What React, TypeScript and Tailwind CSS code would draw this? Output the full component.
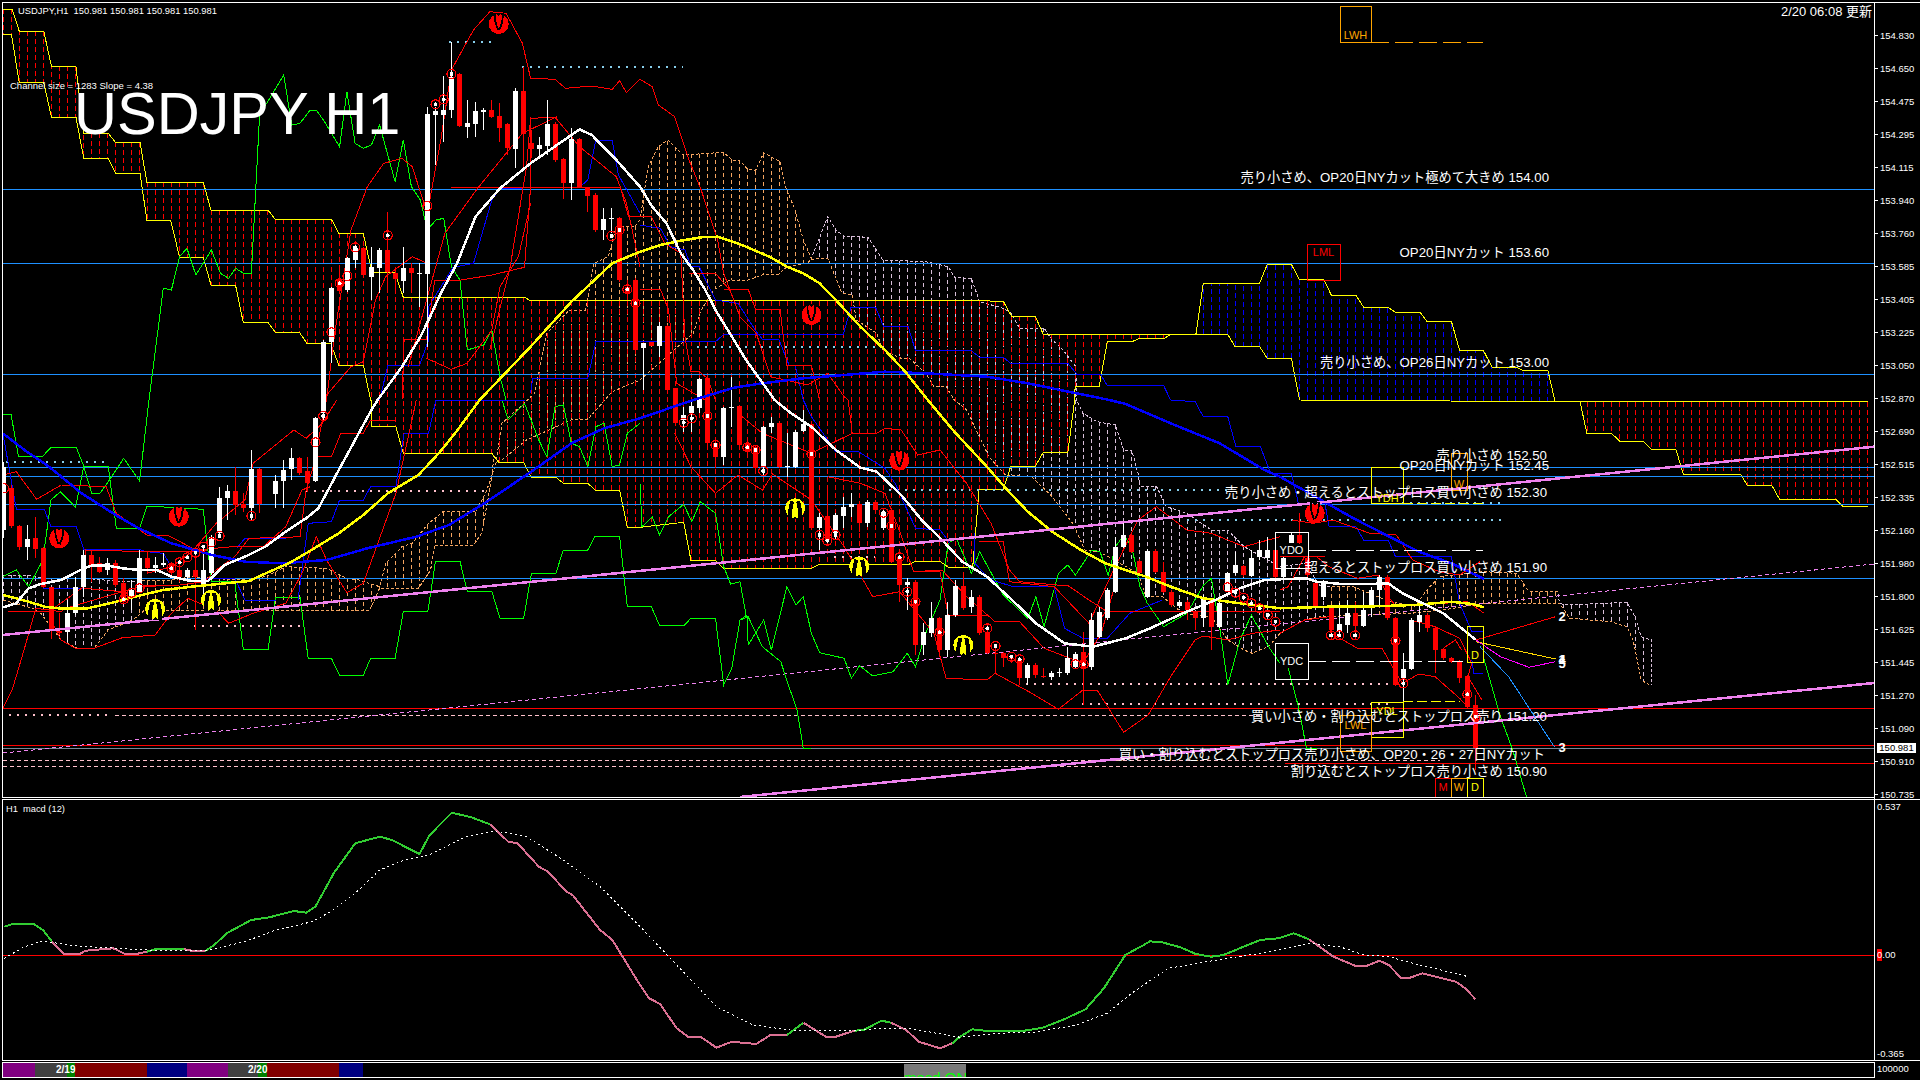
import React from "react";

type Pt = [number, number];
const tile = (ox: number, oy: number, sx = 2.45, sy = 3) => (f: number[]): Pt[] => {
  const out: Pt[] = [];
  for (let i = 0; i < f.length; i += 2) out.push([ox + f[i] / sx, oy + f[i + 1] / sy]);
  return out;
};
const t1 = tile(0, 0), t2 = tile(640, 0), t3 = tile(1280, 0), t4 = tile(0, 400), t5 = tile(640, 400), t6 = tile(1280, 400);
const m7 = tile(0, 780, 1.633, 3), m8 = tile(960, 780, 1.633, 3);
const str = (p: Pt[]) => p.map(([x, y]) => `${x.toFixed(1)},${y.toFixed(1)}`).join(" ");

const Line = ({ p, c, w = 1, d }: { p: Pt[]; c: string; w?: number; d?: string }) => (
  <polyline points={str(p)} fill="none" stroke={c} strokeWidth={w} strokeDasharray={d} />
);

const yAt = (p: Pt[], x: number): number | null => {
  for (let i = 0; i < p.length - 1; i++) {
    const [a, b] = [p[i], p[i + 1]];
    if (x >= a[0] && x <= b[0]) return b[0] === a[0] ? b[1] : a[1] + ((b[1] - a[1]) * (x - a[0])) / (b[0] - a[0]);
  }
  return null;
};

// Ichimoku span lines
const U: Pt[] = [
  ...t1([7,28,30,28,47,93,107,93,126,198,186,198,205,400,265,400,283,427,343,427,360,547,498,547,517,631,657,631,674,658,812,658,830,700,890,700,908,800,908,817,967,817,988,892,1285,892,1300,902,1568,902]),
  ...t2([0,902,825,902,890,904,910,948,968,948,988,1003,1360,1003,1440,1003,1458,1040,1518,1040,1537,1075,1568,1075]),
  ...t3([0,1075,28,1075,47,1195]),
  ...t6([47,0,672,5,1440,5]),
];
const L: Pt[] = [
  ...t1([7,102,28,102,47,247,107,247,126,351,186,351,205,474,265,474,283,520,343,520,360,660,418,660,440,772,498,772,517,855,577,855,596,968,657,968,674,996,733,996,752,1030,810,1030,830,1095,890,1095,908,1200]),
  ...t4([909,0,909,80,970,80,988,160,1205,160,1222,188,1283,188,1302,232,1362,232,1380,250,1440,250,1458,270,1518,270,1537,382,1568,382]),
  ...t5([0,382,107,367,125,482,185,482,205,505,420,505,440,492,660,492,675,484,735,484,755,502,815,502,828,310,830,268,890,268,908,200,968,200,988,157,1048,157,1065,0]),
  ...t2([1066,1158,1125,1158,1145,1025,1205,1025,1225,1015,1285,1015,1300,1003,1362,1003,1380,850,1518,850,1537,793,1568,793]),
  ...t3([0,793,28,793,47,838,107,838,126,886,186,886,205,922,264,922,283,937,343,937,360,964,420,964,440,1051,498,1051,520,1102,580,1102,595,1111,656,1111,672,1195]),
  ...t6([673,5,735,5,752,100,812,100,832,123,890,123,910,148,970,148,988,222,1128,222,1145,256,1205,256,1224,298,1362,298,1380,320,1440,320]),
];
const CU: Pt[] = [
  ...t4([7,525,70,525,105,535,210,535,300,545,420,540,470,530,580,540,650,530,700,500,800,505,850,535,880,540,930,560,945,490,985,440,1010,430,1050,370,1085,335,1165,335,1190,280,1215,190,1230,70]),
  ...t1([1310,1180,1340,1000,1395,930,1435,930,1455,790,1490,770,1510,680,1555,680]),
  ...t2([0,660,20,500,45,440,68,420,105,465,205,457,225,480,243,480,262,505,283,512,303,458,343,485,358,565,380,630,400,720,420,775,460,650,480,690,500,708,558,712,595,780,700,785,755,800,772,833,812,835,832,905,890,925,910,940,930,985,990,985,1010,1020,1030,1040,1068,1100,1069,1200]),
  ...t5([1070,0,1085,40,1120,65,1165,75,1185,150,1205,150,1220,220,1225,258,1265,258,1290,320,1340,340,1400,390,1440,390,1480,440,1568,500]),
  ...t6([0,500,60,490,100,560,180,560,260,600,330,620,360,570,390,530,500,515,580,520,610,575,680,575,685,610,700,615,850,607,870,650,885,710,910,720,910,855]),
];
const CL: Pt[] = [
  ...t4([7,600,80,625,100,640,150,720,190,745,230,745,265,690,325,660,355,630,460,632,905,632,930,565,1025,565,1055,510,1065,435,1160,435,1180,400,1195,300,1205,230,1210,170,1225,185,1290,120,1400,60,1440,58,1500,-25,1568,-60]),
  ...t2([130,1000,150,930,180,870,220,840,265,840,300,825,340,822,360,800,410,790,420,778,460,775,495,880,520,885,530,960,580,1000,595,1050,640,1075,660,1075,700,1120,720,1160,750,1160,770,1200]),
  ...t5([771,0,800,30,855,170,895,225,960,230,1010,290,1060,370,1090,450,1125,455,1220,520,1240,590,1280,590,1330,640,1400,650,1440,720,1480,750,1500,760,1540,740,1568,700]),
  ...t6([0,700,60,660,100,650,320,640,400,630,500,610,685,610,710,655,810,665,850,680,865,720,885,840,905,855]),
];

const bars = Array.from({ length: 234 }, (_, k) => 3 + 8 * k);
const span = (a: Pt[], b: Pt[], c: (x: number) => string, d: string) =>
  bars.map((x) => {
    const ya = yAt(a, x), yb = yAt(b, x);
    if (ya === null || yb === null || Math.abs(ya - yb) < 2) return null;
    return <line key={x} x1={x} x2={x} y1={ya} y2={yb} stroke={c(x)} strokeDasharray={d} />;
  });

const isTan = (x: number) => (x >= 135 && x < 812) || (x >= 1330 && x < 1558);

// [zoom x, body top, body bottom, wick top, wick bottom, 0 white | 1 red]
const C4 = [[8,200,390,185,415,0],[27,265,378,255,385,1],[47,378,440,375,450,1],[67,418,440,375,480,0],[86,415,448,350,475,1],[106,445,560,440,565,1],[125,562,688,560,718,1],[145,692,700,640,705,1],[165,640,695,600,725,0],[184,560,640,530,645,0],[204,465,560,450,590,0],[224,465,500,450,545,1],[243,490,515,470,520,1],[263,490,510,475,525,0],[283,490,555,480,560,1],[303,548,605,535,610,1],[322,570,590,540,630,0],[342,475,575,450,580,0],[361,475,505,455,520,1],[381,495,503,470,520,0],[400,490,495,460,500,0],[420,490,515,485,525,1],[440,510,530,490,545,1],[459,510,530,505,545,0],[479,510,530,455,690,1],[498,510,560,435,600,0],[518,410,520,405,525,0],[538,295,400,260,410,0],[557,272,295,255,360,0],[577,272,315,200,345,1],[596,312,325,280,335,1],[616,207,325,150,360,0],[636,208,312,205,340,1],[675,243,282,225,325,0],[694,210,242,180,325,0],[714,175,208,145,240,0],[734,175,220,170,225,1],[753,212,248,170,275,1],[773,55,243,50,245,0],[792,-174,40,-180,60,0]];
const C1 = [[810,865,1025,860,1090,0],[830,840,872,805,880,1],[851,775,870,770,875,0],[870,745,780,735,805,0],[890,745,826,740,830,1],[910,800,830,740,900,0],[930,750,805,745,880,0],[950,750,815,635,880,1],[969,818,838,800,870,1],[988,803,843,740,880,0],[1008,803,820,790,880,1],[1028,820,822,790,920,0],[1047,343,822,320,1040,0],[1067,332,345,320,495,0],[1087,330,345,228,425,0],[1106,230,330,125,355,0],[1126,222,378,220,380,1],[1145,370,380,300,415,0],[1165,333,372,305,410,0],[1185,330,335,325,390,0],[1204,330,350,300,355,1],[1224,347,385,310,425,1],[1243,372,443,370,465,1],[1263,272,446,265,505,0],[1283,272,402,200,500,1],[1302,430,446,390,475,1],[1322,435,446,410,475,0],[1341,372,438,300,465,0],[1361,372,480,365,485,1],[1381,477,548,475,598,1],[1400,417,548,385,600,0],[1420,417,560,415,565,1],[1439,562,587,560,635,1],[1459,585,690,580,695,1],[1479,657,690,625,720,0],[1498,655,658,625,700,0],[1518,655,840,650,845,1],[1537,860,880,840,900,1],[1557,840,1050,835,1055,1]];
const C5 = [[8,-170,-155,-170,-30,0],[28,-175,-163,-175,-163,1],[47,-222,-162,-235,-130,0],[67,-222,-30,-225,-25,1],[86,-35,70,-30,75,1],[106,45,60,20,95,0],[125,18,40,0,95,0],[145,-62,25,-65,40,0],[165,-65,130,-68,135,1],[184,128,170,120,205,1],[204,25,170,20,195,0],[224,20,25,-70,80,0],[243,18,135,15,140,1],[263,130,155,125,160,1],[283,140,205,135,210,1],[302,82,200,78,225,0],[322,68,80,50,100,0],[342,70,200,68,205,1],[361,197,202,100,230,0],[381,95,200,90,205,0],[400,72,92,30,95,0],[420,72,385,70,390,1],[440,350,385,340,450,0],[459,348,420,270,432,1],[479,345,400,340,420,0],[498,320,348,290,385,0],[518,313,320,280,350,0],[538,312,368,310,395,1],[557,305,368,300,380,0],[577,305,330,300,335,1],[596,335,385,330,390,0],[616,330,485,325,490,1],[636,470,555,465,605,1],[655,545,555,535,630,0],[675,545,735,540,765,1],[694,695,735,670,765,0],[714,655,700,605,710,0],[734,655,750,650,770,1],[753,645,750,605,770,0],[773,558,645,540,650,0],[792,558,625,515,630,1],[812,590,620,570,640,0],[832,590,700,585,705,1],[851,695,760,670,762,1],[871,760,762,735,820,1],[891,760,775,755,800,1],[910,775,778,770,790,1],[930,780,835,775,855,1],[950,795,835,790,855,0],[969,795,825,790,835,1],[989,828,830,805,835,1],[1008,818,830,812,840,0],[1028,815,820,805,830,0],[1047,775,820,740,825,0],[1067,762,800,755,805,0],[1087,755,805,695,915,1],[1106,660,800,640,810,0],[1126,635,710,620,715,0],[1145,570,655,565,660,0],[1165,440,575,410,580,0],[1185,405,440,370,445,0],[1204,405,455,400,460,1],[1224,482,520,478,525,1],[1243,452,590,448,595,0],[1263,452,515,448,520,1],[1283,515,575,485,580,1],[1302,575,615,570,620,1],[1322,605,618,600,625,0],[1341,605,630,600,660,1],[1361,637,655,632,690,1],[1380,590,655,585,680,0],[1400,600,680,595,750,1],[1420,610,680,605,685,0],[1440,520,572,515,575,0],[1459,495,520,455,525,0],[1479,498,525,495,530,1],[1498,475,527,450,530,0],[1518,450,472,420,480,0],[1538,450,475,410,480,0],[1558,450,530,445,535,1]];
const C6 = [[8,475,530,470,535,0],[28,405,428,395,430,0],[47,405,430,340,432,1],[67,475,525,468,530,1],[86,550,620,545,625,1],[106,545,590,540,600,0],[125,620,690,615,720,1],[145,672,692,610,700,0],[165,640,675,600,700,0],[184,640,678,605,720,1],[204,630,678,575,680,0],[224,570,620,560,650,0],[243,530,570,525,620,0],[263,530,655,525,660,1],[283,655,855,650,858,1],[302,808,835,760,1000,0],[322,660,808,655,810,0],[341,645,665,615,695,0],[361,645,685,640,695,1],[381,685,750,680,820,1],[400,748,775,745,780,1],[420,775,785,772,788,1],[440,785,833,780,850,1],[459,828,920,825,925,1],[479,915,1045,885,1110,1]];

const candles = (rows: number[][], ox: number, oy: number) =>
  rows.map((r) => {
    const k = Math.round((ox + r[0] / 2.45 - 3) / 8);
    const x = 3 + 8 * k;
    const col = r[5] ? "#ff0000" : "#ffffff";
    const top = oy + r[1] / 3, bot = oy + r[2] / 3;
    return (
      <g key={`${ox}-${r[0]}`}>
        <line x1={x} x2={x} y1={oy + r[3] / 3} y2={oy + r[4] / 3} stroke={col} />
        <rect x={x - 2.5} y={top} width={5} height={Math.max(1, bot - top)} fill={col} />
      </g>
    );
  });

const rings: Pt[] = [
  ...t1([812,997,832,850,851,828,870,742,950,706,1047,618,1067,313,1087,298,1106,222,1498,708,1518,690,1537,868,1557,910]),
  ...t4([10,265,792,48,773,127,538,408,518,427,498,440,479,458,459,472,440,487,420,505,616,348,342,565,322,578,303,598]),
  ...t5([107,68,127,55,165,48,185,135,263,142,283,150,302,213,420,162,597,338,616,378,636,472,655,575,675,605,440,405,459,422,479,405,734,697,851,685,871,738,910,770,930,778,1067,793,1087,793,1440,562,1459,578,1479,593,1498,610,1518,625,1538,645,1557,665]),
  ...t6([125,706,145,706,184,706,283,722,302,850,459,883,479,950]),
];
const Down: Pt[] = [...t1([1222,72]), ...t2([420,945]), ...t4([438,350,145,415]), ...t5([635,182]), ...t6([85,340])];
const UpA: Pt[] = [...t4([380,627,517,600]), ...t5([380,325,537,500,792,735])];

const Arrow = ({ p, up }: { p: Pt; up?: boolean }) => {
  const c = up ? "#ffff00" : "#ff0000";
  const slit = up ? 4 : 1.8;
  return (
    <g transform={`translate(${p[0]} ${p[1]}) scale(1 ${up ? -1 : 1})`}>
      <ellipse cx={0} cy={0} rx={10} ry={10} fill={c} />
      <path d="M -3 -11 L 3 -11 L 0 -8 Z" fill="#000000" />
      <path d={up ? "M -5 -11 Q -5.5 -2 -3 7" : "M -4 -11 Q -4.5 -2 -0.5 6"} fill="none" stroke="#000000" strokeWidth={slit} />
      <path d={up ? "M 5 -11 Q 5.5 -2 3 7" : "M 4 -11 Q 4.5 -2 0.5 6"} fill="none" stroke="#000000" strokeWidth={slit} />
    </g>
  );
};

const reds: Pt[][] = [
  t4([7,925,30,870,60,745,88,625,150,635,160,625,300,575,345,560,440,555,500,545,530,510,575,470,610,415,700,412,735,410,750,270,775,170,812,170,835,100,890,100,908,60,970,60]),
  t4([7,225,40,215,90,298,150,255,260,260,285,340,360,405,410,405,480,450,570,440,645,440,700,380,740,270,760,260]),
  t4([120,650,150,720,185,745,230,745,300,713,380,705,420,640,460,595,530,630,560,670,620,640,700,610,740,520,775,410,800,480,850,578,890,550,970,280,1020,0]),
  t4([360,520,420,500,470,455,530,370,600,300,620,190,720,90,750,115,790,70,825,0]),
  t4([205,565,300,575,360,555,420,555]),
  t4([20,635,120,635,205,560,210,450,360,455,500,455]),
  t1([790,1200,860,1100,890,1085,920,900,945,830,1010,770,1047,790]),
  [...t4([780,120,800,0]), ...t1([820,1000,860,690,900,560,940,490,985,475,1010,500,1047,640,1080,420,1106,210,1160,90,1200,35,1240,40,1280,130,1300,235,1360,238,1385,265,1450,258,1500,268,1518,242,1535,278,1568,238]), ...t2([0,238,30,260,45,315,85,350,120,480,150,570,190,720,205,820,245,950,285,1000,320,1130,410,1155,460,1120,500,1190,510,1200]), ...t5([510,0,520,100,580,100,600,85,640,90,680,165,735,150,800,250,860,370,905,510,930,545,1050,558,1100,600,1145,635,1400,635])],
  t1([1000,1100,1090,700,1170,565,1280,400,1365,350]),
  t1([1200,1050,1250,800,1290,500,1300,355,1360,352,1420,440,1510,530,1535,610,1568,800]),
  t1([1045,1075,1105,1108,1145,1090,1205,990,1225,860,1270,770,1300,610]),
  t1([1105,563,1520,563,1540,650,1568,650]),
  t1([985,1200,990,1018,1045,1018,1065,840,1130,840,1205,825,1285,802,1300,560,1300,352]),
  t2([0,650,28,650,60,730,100,760,110,1010,125,1115,145,1115,165,1135,185,1200]),
  t2([205,868,265,868,283,928,343,928,360,1095,420,1095,440,1200]),
  t2([120,820,185,820,220,870,245,950]),
  t2([0,868,50,868,70,930,90,1150,160,1200]),
  t5([85,100,125,200,185,280,240,225,300,270,325,222,420,300,500,440,570,590,636,575,720,700,750,835,850,840,870,820,960,880,1025,928,1085,870,1120,870,1185,997,1245,945,1300,830,1360,720,1380,708,1440,720,1500,700,1568,690]),
  t5([460,230,540,250,600,280,635,390,670,515,740,510,800,590,870,665,930,665,990,745,1085,790,1130,700,1165,550]),
  t5([830,425,890,425,905,545,1015,560,1100,670,1160,510,1220,360,1265,320,1340,390,1400,400,1480,440,1568,410]),
  t5([675,515,735,515,755,645,850,645]),
  t5([240,40,300,100,420,160,520,100]),
  t5([1130,655,1140,635,1568,635]),
  t6([30,360,80,370,130,360,220,400,285,405,325,480,390,515,440,525,490,485]),
  t6([0,570,20,560,60,470,90,470,120,500,190,535,240,525,265,590,285,620,340,615,460,605,500,640]),
  t6([0,700,60,660,120,650,125,700,190,745,250,745,280,810,300,850,340,822,380,830,440,895,460,920]),
  t6([320,660,380,680,440,715,470,790,460,830,495,900]),
  t6([400,745,430,720,445,750]),
  t6([0,470,110,470]),
];
const blues: Pt[][] = [
  t1([930,1200,950,1097,1028,1095,1050,1020,1050,920,1110,802,1160,790,1205,600,1225,565,1420,562,1440,540,1460,420,1500,420,1515,525,1568,640]),
  t2([0,675,50,685,75,740,110,750,125,800,145,800,185,900,240,910,285,995,300,1018,340,1018,365,1095,380,1095,400,1200]),
  t1([1300,1180,1305,1135,1440,1135,1460,1025,1568,1025]),
  [...t2([0,1025,185,1025,205,1003,498,1003,517,922,577,922,597,980,657,980,675,1052,812,1052,832,1072,890,1072,908,1090,1048,1090,1070,1122,1128,1122,1145,1157,1283,1157,1300,1200]), ...t5([1300,0,1360,5,1380,50,1440,50,1460,140,1520,140,1545,220]), ...t6([0,220,28,220,45,310,110,310,120,378,185,378,205,420,265,420,283,470,420,470,440,610,470,695,498,695])],
  t4([730,600,755,370,812,365,832,300,890,300,908,260,970,260,990,100,1050,100,1068,0,1285,0]),
  t4([7,100,40,327,108,327,125,380,187,380,205,448,345,450,360,455,400,460,420,500]),
  t4([105,565,205,565,205,535]),
  t4([500,535,575,535,600,600,675,600]),
  t4([580,445,600,415,700,415]),
  t5([400,0,420,50,480,155,535,155,600,205,625,250,675,385,735,390,760,430]),
  t5([820,400,820,490,860,540,915,560,1015,560,1040,685,1085,715,1145,715,1200,640,1280,600]),
  t6([470,780,475,820,498,820]),
];
const greens: Pt[][] = [
  t1([365,1200,400,865,420,870,440,770,458,745,480,825,518,750,540,820,560,835,577,805,597,820,616,820,630,490,636,345,695,225,715,375,735,370,760,330,775,330,795,365,832,440,850,275,870,430,890,445,910,435,930,375,968,545,988,420,1008,560,1030,600,1047,690,1068,660,1087,655,1106,800,1127,840,1145,1050,1185,1035,1205,990,1225,1130,1240,1200]),
  t4([365,0,342,243,303,175,268,240,245,280,225,280,205,200,185,322,148,275,125,300,105,480,70,560,40,510,7,530]),
  t4([7,42,27,42,45,168,105,168,125,142,187,142,205,198,265,198,285,385,342,385,360,318,498,328,518,545,575,545,596,747,657,747,675,592,735,592,755,775,812,775,832,826,890,826,908,775,968,775,988,635,1048,635,1067,484,1127,484,1145,574,1205,574,1225,655,1283,655,1302,520,1362,520,1380,450,1440,450,1458,409,1518,409,1537,620,1568,620]),
  t5([0,620,28,620,48,677,107,677,125,655,185,655,205,855,225,805,245,660,262,645,265,735,303,660,322,750,360,560,382,615,400,590,420,700,440,758,500,775,518,835,538,797,570,828,620,815,655,760,675,800,700,700,735,600,755,430,775,415,812,520,832,455,890,585,950,655,970,590,990,680,1025,520,1048,495,1067,525,1107,450,1127,455,1147,525,1165,440,1185,405,1205,440,1225,560,1243,610,1283,680,1340,640,1381,555,1400,535,1420,680,1440,855,1470,720,1498,645,1540,740,1568,790]),
  t4([1230,0,1245,60,1285,10,1320,120,1340,170,1360,20,1380,15,1400,130,1420,140,1440,200,1460,80,1480,70,1500,200,1518,195,1537,100,1568,70]),
  t5([0,250,5,380,30,350,48,405,70,350,107,313,127,365,148,305,185,340,205,500,222,552,245,545,260,645]),
  t5([245,660,265,650,300,740,345,785,362,850,385,930,400,1045,420,1045]),
  t6([20,805,45,920,65,1045,90,1045]),
  t6([498,770,540,950,570,1050,605,1195]),
];

const White = [...t4([7,622,40,610,70,565,100,552,150,540,205,505,225,497,265,497,300,505,340,510,385,510,420,530,470,543,510,543,550,495,600,470,650,440,700,395,750,355,780,325,830,210,870,120,910,30,925,0]), ...t1([985,1100,1030,1010,1050,960,1080,880,1120,790,1165,650,1225,565,1300,490,1420,388,1450,405,1510,480,1568,560]), ...t2([30,620,65,670,100,760,130,810,160,870,185,930,220,1000,260,1080,330,1200]), ...t5([370,40,420,80,480,150,540,203,580,215,640,285,690,360,740,420,790,485,850,530,920,610,970,670,1040,730,1110,740,1190,715,1250,685,1330,640,1410,600,1470,565,1530,540,1568,538]), ...t6([65,535,90,545,150,552,220,552,265,550,300,580,350,610,400,640,460,700,480,720])];
const Yellow = [...t4([7,585,50,598,110,620,150,626,210,626,270,610,330,590,400,570,470,560,610,543,660,515,710,488,750,460,830,400,890,345,950,280,1025,225,1075,160,1115,100,1175,0]), ...t1([1300,1040,1400,905,1500,790,1568,755]), ...t2([50,735,100,722,150,712,190,710,250,735,320,772,360,800,400,820,440,850,480,900,540,980,600,1050,650,1115,705,1200]), ...t5([770,95,850,200,900,270,950,335,1010,395,1080,450,1140,490,1240,530,1300,560,1380,595,1470,610,1568,625]), ...t6([120,620,200,620,330,615,420,605,470,612,500,622])];
const Blue = [...t4([7,100,60,150,120,200,200,280,290,350,340,385,420,430,520,465,600,485,690,490,800,480,900,445,1020,410,1100,375,1180,315,1290,225,1400,130,1480,85,1568,55]), ...t2([130,1200,230,1163,300,1150,400,1135,500,1125,600,1115,700,1120,850,1130,950,1150,1050,1175,1150,1200]), ...t5([1190,12,1300,70,1420,130,1530,210,1568,230]), ...t6([50,265,115,310,180,355,260,405,340,455,420,490,500,537])];

const hBlue = [189.5, 263.5, 374.5, 467.5, 476.5, 504.5, 578.5];

const Box = ({ x, y, w, h, c, t, ty }: { x: number; y: number; w: number; h: number; c: string; t: string; ty: number }) => (
  <g>
    <rect x={x + 0.5} y={y + 0.5} width={w} height={h} fill="none" stroke={c} />
    <text x={x + w / 2} y={ty} textAnchor="middle" fill={c} fontSize={11} fontFamily="Liberation Sans" shapeRendering="auto">{t}</text>
  </g>
);

const dots: [number, number, number, string][] = [
  [449,491,42,"#87ceeb"],[522,683,67,"#87ceeb"],[6,107,462,"#87ceeb"],[697,876,347,"#87ceeb"],[889,1228,490,"#87ceeb"],[1187,1505,520,"#87ceeb"],[1402,1504,503,"#87ceeb"],
  [306,486,491,"#ffc0cb"],[194,300,626,"#ffc0cb"],[9,107,715,"#ffc0cb"],[834,875,557,"#ffc0cb"],[1026,1390,684,"#ffc0cb"],[1082,1390,704,"#ffc0cb"],
];

const MainChart = () => (
  <svg viewBox="3 3 1871 794" className="block w-full h-full" shapeRendering="crispEdges">
    <defs>
      <clipPath id="tanClip"><rect x="135" y="0" width="677" height="800" /><rect x="1330" y="0" width="228" height="800" /></clipPath>
      <clipPath id="thistleClip"><rect x="0" y="0" width="135" height="800" /><rect x="812" y="0" width="518" height="800" /><rect x="1558" y="0" width="200" height="800" /></clipPath>
    </defs>
    {/* past and future clouds */}
    {span(CU, CL, (x) => (isTan(x) ? "#f4a460" : "#d8bfd8"), "4 3")}
    <g clipPath="url(#tanClip)"><Line p={CU} c="#f4a460" d="3 2" /><Line p={CL} c="#f4a460" d="3 2" /></g>
    <g clipPath="url(#thistleClip)"><Line p={CU} c="#d8bfd8" d="3 2" /><Line p={CL} c="#f4a460" d="3 2" /></g>
    {/* ichimoku cloud */}
    {span(U, L, (x) => (x > 1195 && x < 1556 ? "#0000ff" : "#ff0000"), "5 3")}
    <Line p={U} c="#ffff00" />
    <Line p={L} c="#ffff00" />
    {/* price levels */}
    {hBlue.map((y) => <line key={y} x1={3} x2={1874} y1={y} y2={y} stroke="#1e90ff" />)}
    <line x1={3} x2={1874} y1={708.5} y2={708.5} stroke="#ff0000" />
    <line x1={3} x2={1874} y1={745.5} y2={745.5} stroke="#ff0000" />
    <line x1={3} x2={1874} y1={748.5} y2={748.5} stroke="#778899" />
    <line x1={1285} x2={1874} y1={763.5} y2={763.5} stroke="#ff0000" />
    <line x1={3} x2={1440} y1={760.5} y2={760.5} stroke="#ffc0cb" strokeDasharray="4 3" />
    <line x1={3} x2={1350} y1={766.5} y2={766.5} stroke="#ffc0cb" strokeDasharray="4 3" />
    <line x1={115} x2={1260} y1={715.5} y2={715.5} stroke="#ffc0cb" strokeDasharray="4 3" />
    {dots.map(([a, b, y, c]) => <line key={`${a}-${y}`} x1={a} x2={b} y1={y} y2={y} stroke={c} strokeWidth={2} strokeDasharray="2 6" />)}
    {/* trend lines */}
    <line x1={3} x2={1874} y1={753} y2={564} stroke="#ee82ee" strokeDasharray="4 3" />
    {greens.map((p, i) => <Line key={i} p={p} c="#00ff00" />)}
    {blues.map((p, i) => <Line key={i} p={p} c="#0000ff" />)}
    {reds.map((p, i) => <Line key={i} p={p} c="#ff0000" />)}
    {candles(C4, 0, 400)}
    {candles(C1, 0, 0)}
    {candles(C5, 640, 400)}
    {candles(C6, 1280, 400)}
    <Line p={Blue} c="#0000ff" w={2.5} />
    <Line p={Yellow} c="#ffff00" w={2.5} />
    <Line p={White} c="#ffffff" w={2.5} />
    <line x1={3} x2={1874} y1={635} y2={446.7} stroke="#ee82ee" strokeWidth={2.5} />
    <line x1={740} x2={1874} y1={797} y2={683} stroke="#ee82ee" strokeWidth={2.5} />
    {rings.map((p, i) => (
      <g key={i}>
        <circle cx={p[0]} cy={p[1]} r={4.5} fill="none" stroke="#ff0000" strokeWidth={1.2} />
        <circle cx={p[0]} cy={p[1]} r={2} fill="#ffffff" />
      </g>
    ))}
    {Down.map((p, i) => <Arrow key={i} p={p} />)}
    {UpA.map((p, i) => <Arrow key={i} p={p} up />)}
    {/* projections */}
    <Line p={t6([480,720,675,650])} c="#ff0000" />
    <Line p={t6([480,725,675,777])} c="#ffd700" />
    <Line p={t6([480,720,540,770,610,802,675,785])} c="#ff00ff" />
    <Line p={t6([490,740,560,830,672,1040])} c="#1e90ff" />
    {/* daily, weekly, monthly markers */}
    <line x1={1371} x2={1483} y1={42.5} y2={42.5} stroke="#ffa500" strokeDasharray="18 6" />
    <line x1={1308} x2={1483} y1={550.5} y2={550.5} stroke="#ffffff" strokeDasharray="18 6" />
    <line x1={1308} x2={1463} y1={661.5} y2={661.5} stroke="#ffffff" strokeDasharray="18 6" />
    <line x1={1403} x2={1460} y1={701.5} y2={701.5} stroke="#ffff00" strokeDasharray="10 4" />
    <line x1={1403} x2={1483} y1={503.5} y2={503.5} stroke="#ffff00" strokeDasharray="10 4" />
    <Box x={1340} y={6} w={31} h={36} c="#ffa500" t="LWH" ty={39} />
    <Box x={1307} y={244} w={33} h={36} c="#ff0000" t="LML" ty={256} />
    <Box x={1451} y={453} w={16} h={37} c="#ffa500" t="W" ty={488} />
    <Box x={1371} y={467} w={32} h={36} c="#ffff00" t="YDH" ty={502} />
    <Box x={1275} y={532} w={33} h={36} c="#ffffff" t="YDO" ty={554} />
    <Box x={1275} y={643} w={33} h={36} c="#ffffff" t="YDC" ty={665} />
    <Box x={1371} y={702} w={32} h={35} c="#ffff00" t="YDL" ty={715} />
    <Box x={1340} y={715} w={31} h={36} c="#ffa500" t="LWL" ty={729} />
    <Box x={1467} y={626} w={16} h={36} c="#ffff00" t="D" ty={659} />
    <Box x={1435} y={778} w={16} h={20} c="#ff0000" t="M" ty={791} />
    <Box x={1451} y={778} w={16} h={20} c="#ffa500" t="W" ty={791} />
    <Box x={1467} y={778} w={16} h={20} c="#ffff00" t="D" ty={791} />
    <g fill="#ffffff" fontSize={13} fontWeight={700} fontFamily="Liberation Sans" textAnchor="middle">
      <text x={1562} y={621}>2</text>
      <text x={1562} y={664}>4</text>
      <text x={1562} y={668}>5</text>
      <text x={1562} y={664}>1</text>
      <text x={1562} y={752}>3</text>
    </g>
  </svg>
);

const MacdChart = () => (
  <svg viewBox="3 800 1871 260" className="block w-full h-full" shapeRendering="crispEdges">
    <line x1={3} x2={1874} y1={955.5} y2={955.5} stroke="#ff0000" />
    {[
      m7([7,440,20,432,55,432,70,450,85,485]),
      m7([240,515,255,507,300,507]),
      m7([335,513,350,495,370,460,390,440,410,420,440,412,480,393,500,398,515,380,530,330,545,280,580,190,620,170,640,180,685,222,700,170,715,140,738,98,770,112,800,133]),
      m7([1285,765,1312,728]),
      m7([1395,752,1410,750,1440,722,1455,728]),
      [...m7([1555,790,1568,770]), ...m8([0,770,20,748,40,752,105,752,135,743,170,718,205,688,235,625,270,525,300,495,310,484,330,487,360,502,385,522,410,530,430,525,490,480,520,475,545,460,570,478])],
    ].map((p, i) => <Line key={i} p={p} c="#32cd32" w={2} />)}
    {[
      m7([85,485,105,522,130,522,140,512,185,505,205,523,220,523,240,515]),
      m7([300,507,315,513,335,513]),
      m7([800,133,830,185,845,190,880,260,895,275,925,335,935,345,980,450,1000,480,1040,600,1060,655,1078,672,1105,745,1125,772,1145,772,1170,803,1195,785,1235,792,1258,765,1285,765]),
      m7([1312,728,1350,772,1362,772,1395,752]),
      m7([1455,728,1480,750,1500,785,1535,805,1555,790]),
      m8([570,478,610,530,645,557,665,557,685,542,700,555,720,593,735,593,755,580,810,605,825,625,842,658]),
    ].map((p, i) => <Line key={i} p={p} c="#db7093" w={2} />)}
    <Line
      p={[...m7([7,535,40,500,70,483,120,497,190,505,240,510,300,510,340,510,400,485,450,450,510,425,540,395,580,340,620,270,660,240,700,225,760,170,810,153,860,170,920,240,980,320,1040,430,1100,545,1170,680,1230,735,1290,750,1395,752,1440,745,1490,747,1568,772]), ...m8([60,760,120,757,190,735,240,700,280,640,340,565,420,540,490,520,570,490,620,500,660,525,700,530,740,550,830,590])]}
      c="#ffffff"
      d="2 3"
    />
  </svg>
);

const ticks = ["154.830","154.650","154.475","154.295","154.115","153.940","153.760","153.585","153.405","153.225","153.050","152.870","152.690","152.515","152.335","152.160","151.980","151.800","151.625","151.445","151.270","151.090","150.910","150.735"];

export default function App() {
  return (
    <div className="w-[1920px] h-[1080px] bg-black pt-[2px] pl-[2px] overflow-hidden text-white font-['Liberation_Sans','Noto_Sans_CJK_JP',sans-serif]">
      {/* price pane */}
      <div className="flex h-[796px] border-t border-white">
        <div className="relative w-[1872px] h-[795px] border-l border-b border-white overflow-hidden">
          <MainChart />
          <div className="absolute left-[15px] top-[1px] text-[9.4px] leading-[14px] whitespace-pre">USDJPY,H1  150.981 150.981 150.981 150.981</div>
          <div className="absolute left-[7px] top-[76px] text-[9.5px] leading-[14px] whitespace-pre">Channel size = 1283 Slope = 4.38</div>
          <div className="absolute left-[71px] top-[81px] text-[59.5px] leading-[60px] whitespace-pre">USDJPY H1</div>
          <div className="absolute right-[2px] top-[1px] text-[13px] leading-[16px] whitespace-pre">2/20 06:08 更新</div>
          <div className="absolute right-[325px] top-[167px] text-[13.25px] leading-[16px] whitespace-pre">売り小さめ、OP20日NYカット極めて大きめ 154.00</div>
          <div className="absolute right-[325px] top-[242px] text-[13.25px] leading-[16px] whitespace-pre">OP20日NYカット 153.60</div>
          <div className="absolute right-[325px] top-[352px] text-[13.25px] leading-[16px] whitespace-pre">売り小さめ、OP26日NYカット 153.00</div>
          <div className="absolute right-[327px] top-[445px] text-[13.25px] leading-[16px] whitespace-pre">売り小さめ 152.50</div>
          <div className="absolute right-[325px] top-[455px] text-[13.25px] leading-[16px] whitespace-pre">OP20日NYカット 152.45</div>
          <div className="absolute right-[327px] top-[482px] text-[13.25px] leading-[16px] whitespace-pre">売り小さめ・超えるとストップロス買い小さめ 152.30</div>
          <div className="absolute right-[327px] top-[557px] text-[13.25px] leading-[16px] whitespace-pre">超えるとストップロス買い小さめ 151.90</div>
          <div className="absolute right-[327px] top-[706px] text-[13.25px] leading-[16px] whitespace-pre">買い小さめ・割り込むとストップロス売り 151.20</div>
          <div className="absolute right-[329px] top-[744px] text-[13.25px] leading-[16px] whitespace-pre">買い・割り込むとストップロス売り小さめ、OP20・26・27日NYカット</div>
          <div className="absolute right-[327px] top-[761px] text-[13.25px] leading-[16px] whitespace-pre">割り込むとストップロス売り小さめ 150.90</div>
        </div>
        <div className="relative flex-1 border-l border-white pt-[16px] h-[796px]">
          {ticks.map((t) => (
            <div key={t} className="flex items-center h-[33px] text-[9.5px] leading-none">
              <span className="w-[3px] h-px bg-white mr-[2px]" />
              <span>{t}</span>
            </div>
          ))}
          <div className="absolute left-[2px] top-[740px] w-[39px] h-[10px] bg-white text-black text-[9.5px] leading-[10px] text-center">150.981</div>
        </div>
      </div>
      {/* indicator pane */}
      <div className="flex h-[262px] mt-[1px] border-t border-b border-white">
        <div className="relative w-[1872px] border-l border-white overflow-hidden">
          <MacdChart />
          <div className="absolute left-[3px] top-[3px] text-[9.3px] leading-[12px] whitespace-pre">H1  macd (12)</div>
        </div>
        <div className="flex-1 flex flex-col items-start border-l border-white pl-[2px] pt-[1px] text-[9.5px] leading-[12px]">
          <div>0.537</div>
          <div className="mt-[136px] bg-[linear-gradient(90deg,#ff0000_5px,transparent_5px)]">0.00</div>
          <div className="mt-[87px]">-0.365</div>
        </div>
      </div>
      {/* time strip */}
      <div className="flex h-[16px] mt-[1px]">
        <div className="flex w-[1872px] border-l border-t border-b border-white overflow-hidden">
          <div className="w-[32px] bg-[#800080]" />
          <div className="relative z-10 w-[32px] bg-[#404040] pl-[21px] text-[10px] leading-[14px] font-bold whitespace-pre">2/19</div>
          <div className="w-[8px] bg-[#008000]" />
          <div className="w-[72px] bg-[#800000]" />
          <div className="w-[40px] bg-[#000080]" />
          <div className="w-[41px] bg-[#800080]" />
          <div className="relative z-10 w-[30px] bg-[#404040] pl-[20px] text-[10px] leading-[14px] font-bold whitespace-pre">2/20</div>
          <div className="w-[9px] bg-[#008000]" />
          <div className="w-[72px] bg-[#800000]" />
          <div className="w-[24px] bg-[#000080]" />
          <div className="ml-[541px] mt-[1px] w-[62px] h-[13px] bg-[#7a7a7a] text-[#00ff00] text-[15px] leading-[27px] text-center overflow-hidden whitespace-pre">macd ON</div>
        </div>
        <div className="flex-1 border-l border-white pl-[2px] text-[9.5px] leading-[14px]">100000</div>
      </div>
    </div>
  );
}
